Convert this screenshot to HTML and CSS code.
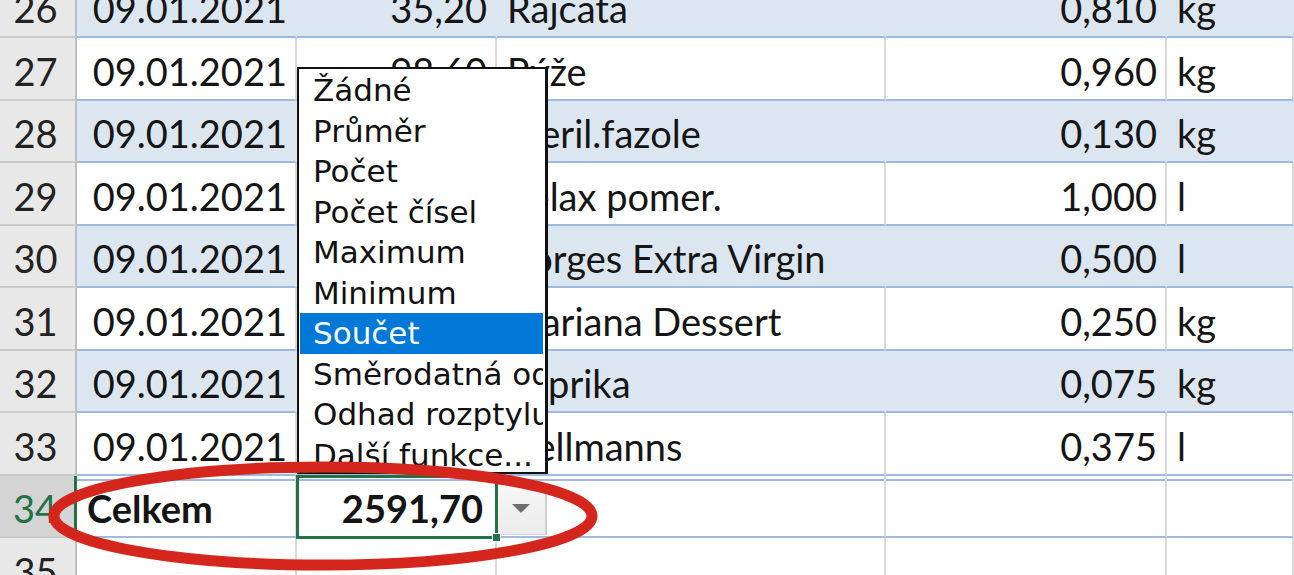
FILE: index.html
```html
<!DOCTYPE html>
<html lang="cs">

<head>
    <meta charset="UTF-8">
    <meta name="viewport" content="width=device-width, initial-scale=1.0">
    <title>Nákupy - Celkem</title>
    <link rel="stylesheet" href="styles.css">
</head>

<body>

    <div class="sheet">
        <div class="row band">
            <div class="rh">26</div>
            <div class="c num">09.01.2021</div>
            <div class="c num">35,20</div>
            <div class="c">Rajcata</div>
            <div class="c num">0,810</div>
            <div class="c">kg</div>
        </div>
        <div class="row plain">
            <div class="rh">27</div>
            <div class="c num">09.01.2021</div>
            <div class="c num">98,60</div>
            <div class="c">Rýže</div>
            <div class="c num">0,960</div>
            <div class="c">kg</div>
        </div>
        <div class="row band">
            <div class="rh">28</div>
            <div class="c num">09.01.2021</div>
            <div class="c num">24,90</div>
            <div class="c">Steril.fazole</div>
            <div class="c num">0,130</div>
            <div class="c">kg</div>
        </div>
        <div class="row plain">
            <div class="rh">29</div>
            <div class="c num">09.01.2021</div>
            <div class="c num">29,90</div>
            <div class="c">Relax pomer.</div>
            <div class="c num">1,000</div>
            <div class="c">l</div>
        </div>
        <div class="row band">
            <div class="rh">30</div>
            <div class="c num">09.01.2021</div>
            <div class="c num">119,00</div>
            <div class="c">Borges Extra Virgin</div>
            <div class="c num">0,500</div>
            <div class="c">l</div>
        </div>
        <div class="row plain">
            <div class="rh">31</div>
            <div class="c num">09.01.2021</div>
            <div class="c num">54,90</div>
            <div class="c">Mariana Dessert</div>
            <div class="c num">0,250</div>
            <div class="c">kg</div>
        </div>
        <div class="row band">
            <div class="rh">32</div>
            <div class="c num">09.01.2021</div>
            <div class="c num">16,90</div>
            <div class="c">Paprika</div>
            <div class="c num">0,075</div>
            <div class="c">kg</div>
        </div>
        <div class="row plain">
            <div class="rh">33</div>
            <div class="c num">09.01.2021</div>
            <div class="c num">64,90</div>
            <div class="c">Hellmanns</div>
            <div class="c num">0,375</div>
            <div class="c">l</div>
        </div>
        <div class="row total">
            <div class="rh active">34</div>
            <div class="c bold">Celkem</div>
            <div class="c num bold selected">2591,70</div>
            <div class="c drop-cell"><span class="drop"></span></div>
            <div class="c"></div>
            <div class="c"></div>
        </div>
        <div class="row empty">
            <div class="rh">35</div>
            <div class="c"></div>
            <div class="c"></div>
            <div class="c"></div>
            <div class="c"></div>
            <div class="c"></div>
        </div>
    </div>

    <div class="menu">
        <div class="item">Žádné</div>
        <div class="item">Průměr</div>
        <div class="item">Počet</div>
        <div class="item">Počet čísel</div>
        <div class="item">Maximum</div>
        <div class="item">Minimum</div>
        <div class="item current">Součet</div>
        <div class="item">Směrodatná odchylka</div>
        <div class="item">Odhad rozptylu</div>
        <div class="item">Další funkce...</div>
    </div>

    <svg class="mark" width="1294" height="575" viewBox="0 0 1294 575">
        <ellipse cx="323" cy="516" rx="269" ry="49" fill="none" stroke="#d5261d" stroke-width="11" />
    </svg>

</body>

</html>
```

FILE: styles.css
```css
body {
    margin: 0;
    height: 575px;
    overflow: hidden;
    position: relative;
    background-color: #fff;
    font-family: Lato, "Liberation Sans", sans-serif;
    font-size: 38px;
    color: #151515;
}

.sheet {
    margin-top: -24.5px;
}

.row {
    display: grid;
    grid-template-columns: 77px 220px 200px 389px 281px 1fr;
    height: 62.5px;
}

.rh,
.c {
    box-sizing: border-box;
    display: flex;
    align-items: flex-end;
    padding-bottom: 5px;
    line-height: 46px;
    white-space: nowrap;
}

.rh {
    justify-content: center;
    padding-right: 4px;
    background-color: #e8e8e8;
    border-right: 2px solid #bfbfbf;
    border-bottom: 2px solid #cbcbcb;
    color: #222;
}

.rh.active {
    background-color: #d4d4d4;
    color: #217346;
    border-right: 3px solid #217346;
}

.c {
    padding-left: 10px;
    padding-right: 8px;
    border-right: 2px solid #dadada;
}

.num {
    justify-content: flex-end;
}

.bold {
    font-weight: 700;
}

/* tabulka */
.band .c,
.plain .c {
    border-bottom: 2px solid #9fbadf;
}

.band .c {
    background-color: #dce6f1;
    border-right-color: transparent;
}

.total .c {
    border-bottom: 2px solid #9fbadf;
    box-shadow: inset 0 3px 0 #fff, inset 0 5px 0 #9fbadf;
}

.empty .c {
    border-bottom: 2px solid #dadada;
}

.selected {
    position: relative;
    outline: 3px solid #217346;
    outline-offset: -2px;
    padding-right: 12px;
}

.selected::after {
    content: "";
    position: absolute;
    right: -6px;
    bottom: -6px;
    width: 7px;
    height: 7px;
    background-color: #217346;
    border: 1px solid #fff;
}

.drop-cell {
    padding: 0;
    align-items: flex-start;
}

.drop {
    box-sizing: border-box;
    display: flex;
    align-items: center;
    justify-content: center;
    width: 50px;
    height: 52px;
    margin-top: 7px;
    background: linear-gradient(#f7f7f7, #ebebeb);
    border-right: 2px solid #cfcfcf;
    border-bottom: 1px solid #d8d8d8;
}

.drop::before {
    content: "";
    border-left: 9px solid transparent;
    border-right: 9px solid transparent;
    border-top: 9px solid #6e6e6e;
}

/* rozbalovaci nabidka */
.menu {
    position: absolute;
    left: 297px;
    top: 67px;
    width: 251px;
    height: 407px;
    box-sizing: border-box;
    padding-top: 1px;
    background-color: #fff;
    border: 2px solid #111;
    border-right-width: 3px;
    overflow: hidden;
    font-family: "DejaVu Sans", sans-serif;
    font-size: 31px;
    color: #111;
}

.item {
    height: 40.5px;
    line-height: 40.5px;
    margin: 0 2px 0 1px;
    padding-left: 13px;
    white-space: nowrap;
    overflow: hidden;
}

.item.current {
    background-color: #0078d7;
    color: #fff;
}

.mark {
    position: absolute;
    left: 0;
    top: 0;
    pointer-events: none;
}
```
